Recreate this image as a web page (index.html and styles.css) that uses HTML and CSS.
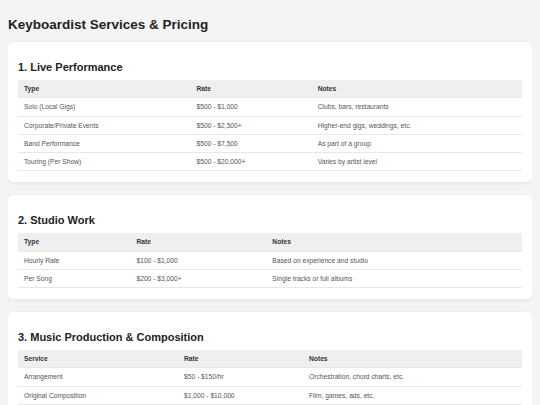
FILE: index.html
```html
<!DOCTYPE html>
<html>
<head>
    <title>Keyboardist Services &amp; Pricing</title>
    <meta charset="UTF-8">
    <link rel="stylesheet" href="styles.css">
</head>
<body>

<h1>Keyboardist Services &amp; Pricing</h1>

<div class="section">
    <h2>1. Live Performance</h2>
    <table>
        <tr><th>Type</th><th>Rate</th><th>Notes</th></tr>
        <tr><td>Solo (Local Gigs)</td><td>$500 - $1,000</td><td>Clubs, bars, restaurants</td></tr>
        <tr><td>Corporate/Private Events</td><td>$500 - $2,500+</td><td>Higher-end gigs, weddings, etc.</td></tr>
        <tr><td>Band Performance</td><td>$500 - $7,500</td><td>As part of a group</td></tr>
        <tr><td>Touring (Per Show)</td><td>$500 - $20,000+</td><td>Varies by artist level</td></tr>
    </table>
</div>

<div class="section">
    <h2>2. Studio Work</h2>
    <table>
        <tr><th>Type</th><th>Rate</th><th>Notes</th></tr>
        <tr><td>Hourly Rate</td><td>$100 - $1,000</td><td>Based on experience and studio</td></tr>
        <tr><td>Per Song</td><td>$200 - $3,000+</td><td>Single tracks or full albums</td></tr>
    </table>
</div>

<div class="section">
    <h2>3. Music Production &amp; Composition</h2>
    <table class="production">
        <tr><th>Service</th><th>Rate</th><th>Notes</th></tr>
        <tr><td>Arrangement</td><td>$50 - $150/hr</td><td>Orchestration, chord charts, etc.</td></tr>
        <tr><td>Original Composition</td><td>$1,000 - $10,000</td><td>Film, games, ads, etc.</td></tr>
    </table>
</div>

</body>
</html>
```

FILE: styles.css
```css
body {
    font-family: "Liberation Sans", Arial, sans-serif;
    background: #f4f4f4;
    margin: 8px;
    color: #333;
}

h1 {
    font-size: 13.5px;
    color: #222;
    margin: 9px 0 9.5px;
}

.section {
    background: #fff;
    border-radius: 5px;
    box-shadow: 0 1px 4px rgba(0, 0, 0, 0.08);
    padding: 19px 10px 11px;
    margin-bottom: 12.5px;
}

h2 {
    font-size: 11px;
    color: #222;
    margin: 0 0 7.5px;
}

table {
    width: 100%;
    border-collapse: collapse;
    font-size: 6.7px;
}

th, td {
    text-align: left;
    padding: 5px 6px;
    line-height: 7.25px;
    border-bottom: 1px solid #e8e8e8;
    box-sizing: border-box;
}

th {
    background: #efefef;
    color: #333;
    font-weight: bold;
}

td {
    color: #555;
}

/* the last table has wider rate column */
.production th:nth-child(1) {
    width: 160px;
}

.production th:nth-child(2) {
    width: 125px;
}
```
